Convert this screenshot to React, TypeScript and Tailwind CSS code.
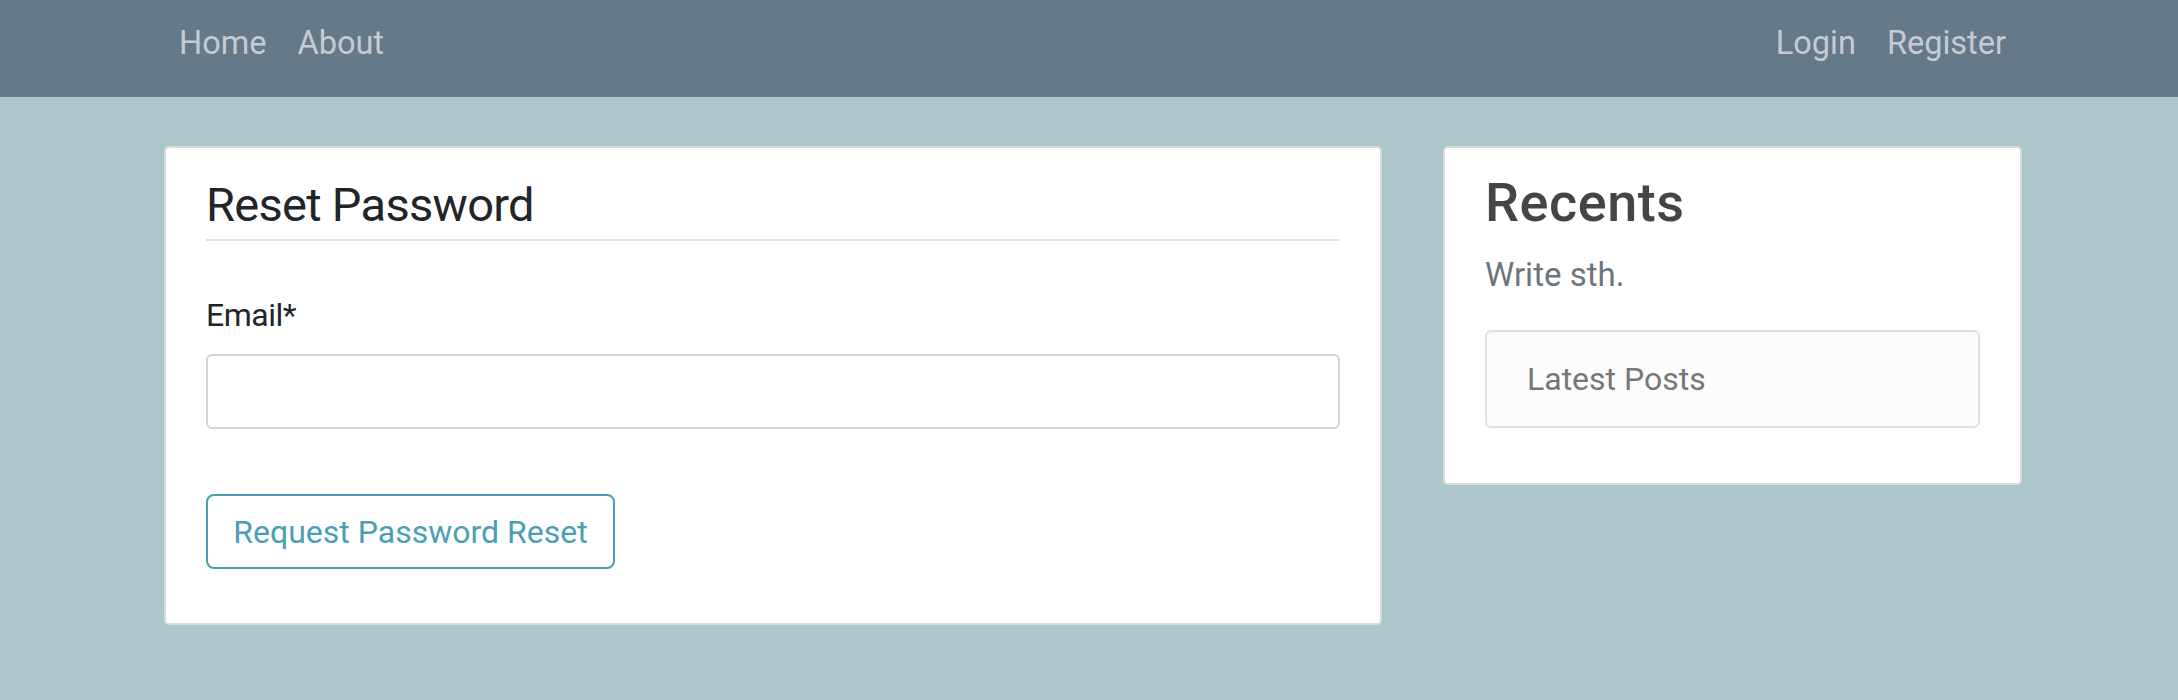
import React from "react";

export default function App() {
  const font = { fontFamily: "Roboto, 'Liberation Sans', sans-serif" };
  return (
    <div className="min-h-[700px] w-[2178px] bg-[#adc6cb]" style={font}>
      <nav className="flex h-[97px] items-start justify-between bg-[#657989] pl-[179px] pr-[172px] pt-[23px] text-[32.5px] leading-[40px] text-[#c5cbd1]">
        <div className="flex gap-[31px]">
          <span>Home</span>
          <span>About</span>
        </div>
        <div className="flex gap-[31px]">
          <span>Login</span>
          <span>Register</span>
        </div>
      </nav>
      <main className="flex items-start gap-[61px] pl-[164px] pt-[49px]">
        <section className="w-[1218px] rounded-[5px] border-2 border-[#d9dcdd] bg-white px-[40px] pb-[54px] pt-[29px]">
          <h1 className="border-b-2 border-[#dee2e6] pb-[6px] text-[47px] leading-[1.2] tracking-[-0.015em] text-[#212529]">
            Reset Password
          </h1>
          <label className="mt-[50px] block text-[32px] leading-[1.5] tracking-[-0.015em] text-[#212529]">
            Email*
          </label>
          <input
            type="email"
            className="mt-[15px] block h-[75px] w-full rounded-[6px] border-2 border-[#ced4da] bg-white px-[20px] text-[32px] outline-none"
          />
          <button className="mt-[65px] flex h-[75px] w-[409px] items-center justify-center rounded-[8px] border-2 border-[#4a9fb5] text-[32px] text-[#4a9fb5]">
            Request Password Reset
          </button>
        </section>
        <aside className="w-[579px] rounded-[5px] border-2 border-[#d9dcdd] bg-white px-[40px] pb-[55px] pt-[23px]">
          <h2 className="text-[54px] font-medium leading-[1.2] tracking-[0.01em] text-[#454545]">
            Recents
          </h2>
          <p className="mt-[14px] text-[33px] leading-[1.5] text-[#6c757d]">
            Write sth.
          </p>
          <div className="mt-[31px] flex h-[98px] items-center rounded-[6px] border-2 border-[#e0e0e0] bg-[#fcfcfc] pl-[40px] text-[32px] text-[#777777]">
            Latest Posts
          </div>
        </aside>
      </main>
    </div>
  );
}
